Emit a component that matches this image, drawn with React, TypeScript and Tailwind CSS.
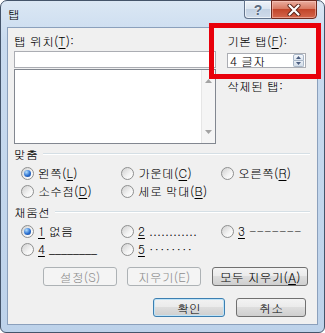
import React from "react";

const U = ({ children }: { children: React.ReactNode }) => (
  <span className="underline underline-offset-[2px] decoration-[1px]">{children}</span>
);

function Radio({ checked }: { checked?: boolean }) {
  return (
    <span className="w-[13px] h-[13px] rounded-full border border-[#8e8f8f] bg-[linear-gradient(135deg,#cfcfcf,#f4f4f4_60%,#ffffff)] flex items-center justify-center shrink-0">
      {checked && (
        <span className="w-[7px] h-[7px] rounded-full bg-[radial-gradient(circle_at_35%_30%,#b5e0ff,#2a6fd0_55%,#153f8a)]" />
      )}
    </span>
  );
}

function RadioItem({ checked, children }: { checked?: boolean; children: React.ReactNode }) {
  return (
    <div className="flex items-center gap-[4px] h-[18px]">
      <Radio checked={checked} />
      <span className="leading-[14px] whitespace-pre">{children}</span>
    </div>
  );
}

function Heading({ children }: { children: React.ReactNode }) {
  return (
    <div className="flex items-center h-[14px] pl-[6px] pr-[7px]">
      <span className="leading-[14px]">{children}</span>
      <div className="flex-1 ml-[5px] h-[2px] border-t border-[#d5dfe5] border-b-white border-b" />
    </div>
  );
}

const btn =
  "h-[19px] rounded-[3px] border flex items-center justify-center leading-[14px] text-[12px]";
const normalBtn =
  btn +
  " border-[#707070] bg-[linear-gradient(#f3f3f3,#ebebeb_45%,#dddddd_50%,#cfcfcf)] text-black";
const disabledBtn = btn + " border-[#adb2b5] bg-[#f4f4f4] text-[#8d8d8d]";

export default function App() {
  return (
    <div className="relative w-[325px] h-[333px] overflow-hidden font-['Gulim','Noto_Sans_CJK_KR','Noto_Sans',sans-serif] text-[12px] text-black">
      <div className="w-[325px] h-[333px] border border-[#44546a] rounded-t-[7px] rounded-b-[6px] bg-[linear-gradient(#dbe7f4,#c9dbef_12%,#bdd2ea)] flex flex-col">
        {/* title bar */}
        <div className="h-[26px] flex items-start">
          <div className="h-[26px] flex items-center pl-[7px] leading-[14px]">탭</div>
          <div className="ml-auto mr-[7px] -mt-[1px] flex">
            <div className="w-[27px] h-[19px] border border-[#62738b] border-r-0 rounded-bl-[4px] bg-[linear-gradient(#eef3f9,#dbe5f0_45%,#c3d2e3_50%,#cfdbea)] flex items-center justify-center shadow-[inset_0_0_0_1px_rgba(255,255,255,0.6)]">
              <span className="text-[14px] leading-[14px] font-bold text-[#5b6b80] font-['Liberation_Sans',sans-serif] [text-shadow:0_0_2px_#fff]">?</span>
            </div>
            <div className="w-[46px] h-[19px] border border-[#6e2a1f] rounded-br-[4px] bg-[linear-gradient(#eaaea0,#d97a63_45%,#c2452a_50%,#d4664c)] flex items-center justify-center shadow-[inset_0_0_0_1px_rgba(255,210,200,0.5)]">
              <svg width="14" height="12" viewBox="0 0 14 12">
                <path d="M2.5 1.5 L11.5 10.5 M11.5 1.5 L2.5 10.5" stroke="#5a2218" strokeWidth="4" strokeLinecap="round" />
                <path d="M2.5 1.5 L11.5 10.5 M11.5 1.5 L2.5 10.5" stroke="#ffffff" strokeWidth="2.2" strokeLinecap="round" />
              </svg>
            </div>
          </div>
        </div>
        {/* client */}
        <div className="ml-[6px] w-[311px] h-[298px] border border-[#8ba0bc] bg-[#f0f0f0] flex flex-col">
          <div className="flex">
            <div className="ml-[6px] w-[202px] pt-[6px]">
              <div className="h-[14px] leading-[14px]">
                탭 위치(<U>T</U>):
              </div>
              <div className="mt-[3px] h-[17px] bg-white border border-[#abadb3]" />
              <div className="mt-[1px] h-[75px] bg-white border border-[#828790] flex justify-end">
                <div className="w-[14px] h-full border-l border-[#e6e6e6] bg-[#f5f5f5] flex flex-col items-center justify-between py-[9px]">
                  <svg width="7" height="4" viewBox="0 0 7 4">
                    <path d="M0 4 L3.5 0 L7 4 Z" fill="#a3a3a3" />
                  </svg>
                  <svg width="7" height="4" viewBox="0 0 7 4">
                    <path d="M0 0 L3.5 4 L7 0 Z" fill="#a3a3a3" />
                  </svg>
                </div>
              </div>
            </div>
            <div className="ml-[11px] pt-[6px]">
              <div className="h-[14px] leading-[14px]">
                기본 탭(<U>F</U>):
              </div>
              <div className="mt-[5px] w-[79px] h-[15px] bg-white border border-[#abadb3] flex items-center">
                <span className="pl-[2px] leading-[13px]">4 글자</span>
                <div className="ml-auto mr-[1px] w-[11px] h-[13px] flex flex-col">
                  <div className="h-[7px] border border-[#a9b7c8] rounded-t-[2px] bg-[linear-gradient(#f5f8fc,#dbe4ef)] flex items-center justify-center">
                    <svg width="5" height="3" viewBox="0 0 5 3">
                      <path d="M0 3 L2.5 0 L5 3 Z" fill="#4b5e80" />
                    </svg>
                  </div>
                  <div className="h-[6px] border border-t-0 border-[#a9b7c8] rounded-b-[2px] bg-[linear-gradient(#e9eef5,#d3dde9)] flex items-center justify-center">
                    <svg width="5" height="3" viewBox="0 0 5 3">
                      <path d="M0 0 L2.5 3 L5 0 Z" fill="#4b5e80" />
                    </svg>
                  </div>
                </div>
              </div>
              <div className="mt-[11px] h-[14px] leading-[14px]">삭제된 탭:</div>
            </div>
          </div>

          <div className="mt-[3px]">
            <Heading>맞춤</Heading>
          </div>
          <div className="mt-[3px] grid grid-cols-[100px_100px_100px] pl-[13px]">
            <RadioItem checked>
              왼쪽(<U>L</U>)
            </RadioItem>
            <RadioItem>
              가운데(<U>C</U>)
            </RadioItem>
            <RadioItem>
              오른쪽(<U>R</U>)
            </RadioItem>
            <RadioItem>
              소수점(<U>D</U>)
            </RadioItem>
            <RadioItem>
              세로 막대(<U>B</U>)
            </RadioItem>
          </div>

          <div className="mt-[5px]">
            <Heading>채움선</Heading>
          </div>
          <div className="mt-[3px] grid grid-cols-[100px_100px_100px] pl-[13px]">
            <RadioItem checked>
              <U>1</U> 없음
            </RadioItem>
            <RadioItem>
              <U>2</U> ............
            </RadioItem>
            <RadioItem>
              <U>3</U> -------
            </RadioItem>
            <RadioItem>
              <U>4</U> ________
            </RadioItem>
            <RadioItem>
              <U>5</U> <span className="tracking-[1px]">········</span>
            </RadioItem>
          </div>

          <div className="mt-[9px] flex pl-[35px]">
            <div className={disabledBtn + " w-[74px]"}>설정(S)</div>
            <div className={disabledBtn + " w-[74px] ml-[10px]"}>지우기(E)</div>
            <div className={normalBtn + " w-[96px] ml-[11px]"}>
              모두 지우기(<U>A</U>)
            </div>
          </div>

          <div className="mt-[12px] flex pl-[145px]">
            <div className={btn + " w-[72px] border-[#3c7fb1] bg-[linear-gradient(#f2f2f2,#ebebeb_45%,#dddddd_50%,#cfcfcf)] shadow-[inset_0_0_0_1px_#bfe3f7]"}>
              확인
            </div>
            <div className={normalBtn + " w-[70px] ml-[11px]"}>취소</div>
          </div>
        </div>
      </div>
      {/* red annotation box */}
      <div className="absolute left-[209px] top-[23px] w-[112px] h-[56px] border-[5px] border-[#e8000b]" />
    </div>
  );
}
